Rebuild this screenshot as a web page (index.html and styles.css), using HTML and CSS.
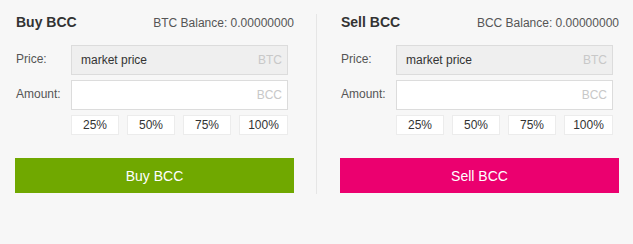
FILE: index.html
```html
<!DOCTYPE html>
<html>
<head>
<meta charset="utf-8">
<link rel="stylesheet" href="styles.css">
</head>
<body>
<div class="trade">
  <section class="panel">
    <div class="head">
      <span class="title">Buy BCC</span>
      <span class="balance">BTC Balance: 0.00000000</span>
    </div>
    <div class="row">
      <label class="lbl">Price:</label>
      <div class="field disabled"><span class="val">market price</span><span class="unit">BTC</span></div>
    </div>
    <div class="row">
      <label class="lbl">Amount:</label>
      <div class="field"><span class="val"></span><span class="unit">BCC</span></div>
    </div>
    <div class="pcts">
      <span class="pct">25%</span><span class="pct">50%</span><span class="pct">75%</span><span class="pct">100%</span>
    </div>
    <button class="btn buy">Buy BCC</button>
  </section>
  <div class="divider"></div>
  <section class="panel">
    <div class="head">
      <span class="title">Sell BCC</span>
      <span class="balance">BCC Balance: 0.00000000</span>
    </div>
    <div class="row">
      <label class="lbl">Price:</label>
      <div class="field disabled"><span class="val">market price</span><span class="unit">BTC</span></div>
    </div>
    <div class="row">
      <label class="lbl">Amount:</label>
      <div class="field"><span class="val"></span><span class="unit">BCC</span></div>
    </div>
    <div class="pcts">
      <span class="pct">25%</span><span class="pct">50%</span><span class="pct">75%</span><span class="pct">100%</span>
    </div>
    <button class="btn sell">Sell BCC</button>
  </section>
</div>
</body>
</html>
```

FILE: styles.css
```css
html, body {
  margin: 0;
  padding: 0;
  background: #f7f7f7;
  font-family: "Liberation Sans", Arial, sans-serif;
  font-size: 12px;
  color: #333;
}
.trade {
  display: flex;
  padding-left: 15px;
}
.panel {
  width: 279px;
  padding-top: 10px;
}
.divider {
  width: 1px;
  background: #e6e6e6;
  margin: 14px 23px 0 22px;
  height: 180px;
}
.head {
  display: flex;
  justify-content: space-between;
  align-items: baseline;
  height: 24px;
  line-height: 24px;
  padding-left: 1px;
}
.title {
  font-weight: bold;
  font-size: 14px;
  color: #333;
}
.balance {
  font-size: 12px;
  color: #555;
}
.row {
  display: flex;
  align-items: center;
  margin-top: 11px;
}
.row + .row {
  margin-top: 5px;
}
.lbl {
  width: 56px;
  padding-left: 1px;
  box-sizing: border-box;
  color: #555;
  font-size: 12px;
  margin-top: -2px;
}
.field {
  width: 217px;
  height: 30px;
  box-sizing: border-box;
  border: 1px solid #dcdcdc;
  background: #fff;
  display: flex;
  align-items: center;
  justify-content: space-between;
  padding: 0 5px 0 9px;
}
.field.disabled {
  background: #efefef;
}
.val {
  color: #333;
}
.unit {
  color: #c8c8c8;
}
.pcts {
  display: flex;
  gap: 8px;
  margin: 5px 0 0 56px;
  width: 217px;
}
.pct {
  flex: 1;
  height: 20px;
  line-height: 18px;
  box-sizing: border-box;
  border: 1px solid #ececec;
  background: #fff;
  text-align: center;
  color: #333;
}
.pct:last-child {
  flex: 0 0 49px;
}
.btn {
  display: block;
  width: 279px;
  height: 35px;
  margin-top: 23px;
  border: 0;
  color: #fff;
  font-family: "Liberation Sans", Arial, sans-serif;
  font-size: 14px;
  padding: 0;
}
.buy {
  background: #70a800;
}
.sell {
  background: #eb006f;
}
```
